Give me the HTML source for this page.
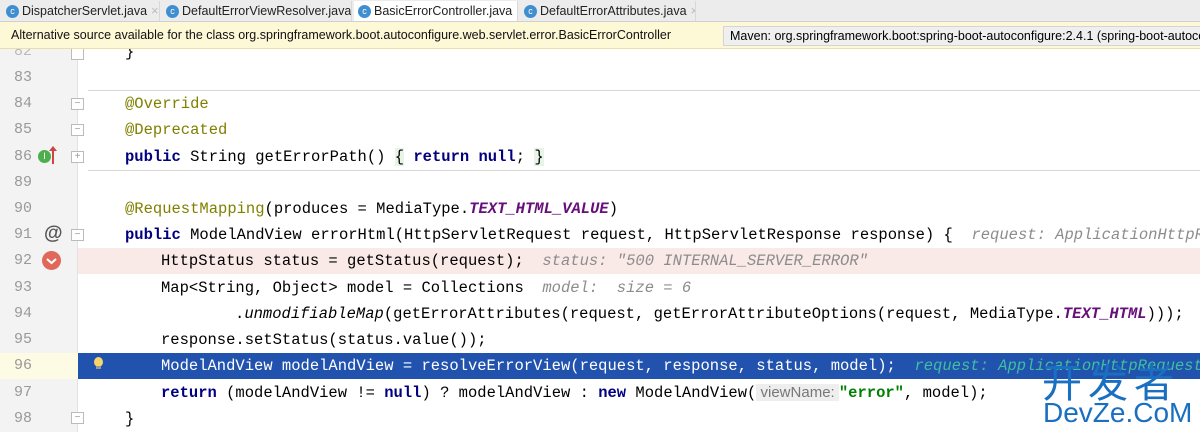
<!DOCTYPE html>
<html><head><meta charset="utf-8"><style>
*{margin:0;padding:0;box-sizing:border-box}
body{width:1200px;height:432px;overflow:hidden;background:#fff;position:relative;font-family:"Liberation Mono",monospace}
.tabs{position:absolute;left:0;top:0;width:1200px;height:22px;background:#ececec;border-bottom:1px solid #d0d0d0;font-family:"Liberation Sans",sans-serif;font-size:12.5px;color:#222}
.tab{position:absolute;top:1px;height:20px;line-height:20px;padding-left:20px;border-right:1px solid #d8d8d8;white-space:nowrap;overflow:hidden}
.tab i{position:absolute;left:4px;top:4px;width:13px;height:13px;border-radius:50%;background:#3f8fd0;color:#fff;font-style:normal;font-size:9px;line-height:13px;text-align:center}
.tab b{font-weight:normal;color:#bbb;margin-left:4px}
.tab.act{background:#fff}
.note{position:absolute;left:0;top:22px;width:1200px;height:27px;background:#fdf8d6;border-bottom:1px solid #e6e0b0;font-family:"Liberation Sans",sans-serif;font-size:12.5px;line-height:27px;color:#111;padding-left:11px}
.mvn{position:absolute;left:723px;top:26px;width:480px;height:20px;background:#efefef;border:1px solid #d4d4d4;font-family:"Liberation Sans",sans-serif;font-size:12.5px;line-height:18px;padding-left:6px;white-space:nowrap;overflow:hidden}
.gut{position:absolute;left:0;top:49px;width:78px;height:383px;background:#f3f3f3;border-right:1px solid #e2e2e2}
.ln{position:absolute;left:0;width:32px;text-align:right;font-size:15px;color:#999;height:26px;line-height:26px}
.row{position:absolute;left:78px;width:1122px;height:26px;line-height:26px;font-size:15.5px;white-space:pre;color:#000;overflow:hidden}
.k{color:#000080;font-weight:bold}
.a{color:#808000}
.s{color:#660e7a;font-style:italic;font-weight:bold}
.h{color:#8c8c8c;font-style:italic}
.str{color:#008000;font-weight:bold}
.sep{position:absolute;left:88px;width:1112px;height:1px;background:#d8d8d8}
.fold{position:absolute;left:71px;width:13px;height:12px;border:1px solid #bbb;background:#fff;font-size:10px;line-height:9px;text-align:center;color:#999;font-family:"Liberation Sans",sans-serif}
</style></head><body>
<div class="gut"></div>
<div style="position:absolute;left:0;top:353px;width:78px;height:26px;background:#fdfbe4"></div>
<div class="row" style="top:248px;background:#faeae7"></div>
<div class="row" style="top:353px;background:#2153ae"></div>

<div class="ln" style="top:39px;color:#bbb">82</div>
<div class="ln" style="top:65px">83</div>
<div class="ln" style="top:91px">84</div>
<div class="ln" style="top:117px">85</div>
<div class="ln" style="top:144px">86</div>
<div class="ln" style="top:170px">89</div>
<div class="ln" style="top:196px">90</div>
<div class="ln" style="top:222px">91</div>
<div class="ln" style="top:248px">92</div>
<div class="ln" style="top:275px">93</div>
<div class="ln" style="top:301px">94</div>
<div class="ln" style="top:327px">95</div>
<div class="ln" style="top:353px">96</div>
<div class="ln" style="top:380px">97</div>
<div class="ln" style="top:406px">98</div>

<div class="fold" style="top:48px"></div>
<div class="fold" style="top:98px">−</div>
<div class="fold" style="top:124px">−</div>
<div class="fold" style="top:151px">+</div>
<div class="fold" style="top:229px">−</div>
<div class="fold" style="top:412px">−</div>

<div style="position:absolute;left:38px;top:150px;width:13px;height:13px;border-radius:50%;background:#4cae4c;color:#fff;font-size:9px;text-align:center;line-height:13px;font-family:'Liberation Sans',sans-serif">I</div>
<div style="position:absolute;left:52px;top:148px;width:2px;height:16px;background:#c44"></div>
<div style="position:absolute;left:49px;top:146px;width:0;height:0;border-left:4px solid transparent;border-right:4px solid transparent;border-bottom:5px solid #c44"></div>
<div style="position:absolute;left:44px;top:222px;font-size:19px;line-height:24px;color:#555;font-family:'Liberation Sans',sans-serif;font-weight:bold">@</div>
<div style="position:absolute;left:42px;top:251px;width:19px;height:19px;border-radius:50%;background:#e0685a"></div>
<svg style="position:absolute;left:42px;top:251px" width="19" height="19"><path d="M5 8 L9.5 12 L14 8" stroke="#fff" stroke-width="2" fill="none"/></svg>
<div style="position:absolute;left:94px;top:357px;width:9px;height:10px;border-radius:50%;background:#f5d66b"></div>
<div style="position:absolute;left:96px;top:366px;width:5px;height:3px;background:#999"></div>

<div class="sep" style="top:90px"></div>
<div class="sep" style="top:170px"></div>

<div class="row" style="top:39px;padding-left:47px">}</div>
<div class="row" style="top:91px;padding-left:47px"><span class="a">@Override</span></div>
<div class="row" style="top:117px;padding-left:47px"><span class="a">@Deprecated</span></div>
<div class="row" style="top:144px;padding-left:47px"><span class="k">public</span> String getErrorPath() <span style="background:#e8f4e8">{</span> <span class="k">return null</span>; <span style="background:#e8f4e8">}</span></div>
<div class="row" style="top:196px;padding-left:47px"><span class="a">@RequestMapping</span>(produces = MediaType.<span class="s">TEXT_HTML_VALUE</span>)</div>
<div class="row" style="top:222px;padding-left:47px"><span class="k">public</span> ModelAndView errorHtml(HttpServletRequest request, HttpServletResponse response) {  <span class="h">request: ApplicationHttpRequest</span></div>
<div class="row" style="top:248px;padding-left:83px">HttpStatus status = getStatus(request);  <span class="h">status: "500 INTERNAL_SERVER_ERROR"</span></div>
<div class="row" style="top:275px;padding-left:83px">Map&lt;String, Object&gt; model = Collections  <span class="h">model:  size = 6</span></div>
<div class="row" style="top:301px;padding-left:157px">.<i>unmodifiableMap</i>(getErrorAttributes(request, getErrorAttributeOptions(request, MediaType.<span class="s">TEXT_HTML</span>)));</div>
<div class="row" style="top:327px;padding-left:83px">response.setStatus(status.value());</div>
<div class="row" style="top:353px;padding-left:83px;color:#fff">ModelAndView modelAndView = resolveErrorView(request, response, status, model);  <span class="h" style="color:#3fbf9f">request: ApplicationHttpRequest</span></div>
<div class="row" style="top:380px;padding-left:83px"><span class="k">return</span> (modelAndView != <span class="k">null</span>) ? modelAndView : <span class="k">new</span> ModelAndView(<span style="background:#eee;color:#777;font-family:'Liberation Sans',sans-serif;font-size:15px"> viewName: </span><span class="str">"error"</span>, model);</div>
<div class="row" style="top:406px;padding-left:47px">}</div>

<div class="tabs">
<div class="tab" style="left:2px;width:158px"><i>c</i>DispatcherServlet.java<b>×</b></div>
<div class="tab" style="left:162px;width:190px"><i>c</i>DefaultErrorViewResolver.java<b>×</b></div>
<div class="tab act" style="left:354px;width:164px"><i>c</i>BasicErrorController.java<b>×</b></div>
<div class="tab" style="left:520px;width:176px"><i>c</i>DefaultErrorAttributes.java<b>×</b></div>
</div>
<div class="note">Alternative source available for the class org.springframework.boot.autoconfigure.web.servlet.error.BasicErrorController</div>
<div class="mvn">Maven: org.springframework.boot:spring-boot-autoconfigure:2.4.1 (spring-boot-autoconfigure-2.4.1-sources.jar)</div>

<div style="position:absolute;left:1042px;top:358px;font-family:'Noto Sans CJK SC',sans-serif;font-size:40px;line-height:44px;color:#1a6fc0;letter-spacing:6px;white-space:nowrap">开发者</div>
<div style="position:absolute;left:1043px;top:399px;font-family:'Liberation Sans',sans-serif;font-size:28px;line-height:28px;color:#1a6fc0;white-space:nowrap">DevZe.CoM</div>
</body></html>
